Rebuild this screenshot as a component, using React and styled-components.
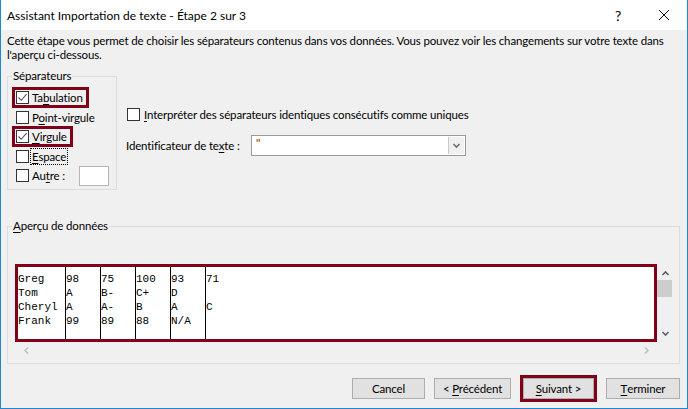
import React from "react";
import styled, { createGlobalStyle } from "styled-components";

const Global = createGlobalStyle`
  html, body { margin: 0; padding: 0; background: #f0f0f0; }
  * { box-sizing: border-box; }
`;

const RED = "#80001a";
const FONT = `Lato, "Noto Sans", "DejaVu Sans", sans-serif`;

const Window = styled.div`
  width: 688px;
  height: 409px;
  display: flex;
  flex-direction: column;
  background: #f0f0f0;
  border: 1px solid #1c87d6;
  border-top: none;
  font-family: ${FONT};
  font-size: 11.5px;
  letter-spacing: -0.15px;
  color: #000;
  overflow: hidden;
`;

const TitleBar = styled.div`
  height: 30px;
  flex: none;
  background: #fff;
  display: flex;
  align-items: center;
  padding-left: 6px;
`;

const Title = styled.div`
  flex: 1;
  font-size: 12px;
  letter-spacing: 0;
`;

const TitleButton = styled.div`
  width: 46px;
  height: 30px;
  display: flex;
  align-items: center;
  justify-content: center;
  font-size: 14px;
`;

const Body = styled.div`
  flex: 1;
  display: flex;
  flex-direction: column;
  padding: 4px 7px 0 6px;
`;

const Intro = styled.p`
  margin: 0;
  line-height: 14px;
`;

const Upper = styled.div`
  display: flex;
  margin-top: 8px;
  align-items: flex-start;
`;

const Group = styled.fieldset`
  margin: 0;
  border: 1px solid #dcdcdc;
  padding: ${(p) => p.$pad};
  width: ${(p) => p.$w};
  height: ${(p) => p.$h};
  min-inline-size: 0;
`;

const Legend = styled.legend`
  padding: 0 1px;
  margin-left: -3px;
  line-height: 12px;
`;

const SepList = styled.div`
  display: flex;
  flex-direction: column;
`;

const SepRow = styled.div`
  height: 19.5px;
  display: flex;
  align-items: center;
`;

const CheckItem = styled.label`
  display: inline-flex;
  align-items: center;
  height: 15px;
  padding: 0 3px 0 1px;
  gap: 3px;
  outline: ${(p) => (p.$hl ? `3px solid ${RED}` : "none")};
`;

const Box = styled.span`
  width: 13px;
  height: 13px;
  flex: none;
  border: 1px solid #333;
  background: #fff;
  display: flex;
  align-items: center;
  justify-content: center;
`;

const Focus = styled.span`
  outline: 1px dotted #000;
  outline-offset: 1px;
`;

const OtherInput = styled.div`
  width: 30px;
  height: 20px;
  margin-left: 11px;
  border: 1px solid #b5b5b5;
  background: #fff;
`;

const Options = styled.div`
  display: flex;
  flex-direction: column;
  padding-left: 10px;
  padding-top: 37px;
`;

const OptionRow = styled.div`
  display: flex;
  align-items: center;
  height: ${(p) => p.$h || "15px"};
  margin-bottom: ${(p) => p.$mb || "0"};
  gap: ${(p) => p.$gap || "0"};
`;

const FieldLabel = styled.span`
  width: 125px;
  margin-left: -1px;
  white-space: nowrap;
`;

const Combo = styled.div`
  width: 215px;
  height: 21px;
  border: 1px solid #9a9a9a;
  background: #fff;
  display: flex;
  align-items: stretch;
`;

const ComboValue = styled.div`
  flex: 1;
  padding-left: 4px;
  color: #b85a10;
  font-weight: bold;
  line-height: 14px;
`;

const ComboBtn = styled.div`
  width: 16px;
  margin: 1px;
  border-left: 1px solid #c8c8c8;
  background: #f0f0f0;
  display: flex;
  align-items: center;
  justify-content: center;
`;

const PreviewArea = styled.div`
  display: flex;
  flex-direction: column;
  padding-top: 30px;
`;

const PreviewRow = styled.div`
  display: flex;
  align-items: stretch;
`;

const ListBox = styled.div`
  width: 642px;
  height: 78px;
  border: 3px solid ${RED};
  background: #fff;
  display: flex;
  font-family: "Liberation Mono", "Courier New", monospace;
  font-size: 11px;
  line-height: 14px;
  letter-spacing: 0;
  color: #000;
`;

const Col = styled.div`
  width: ${(p) => p.$w};
  flex: ${(p) => (p.$grow ? 1 : "none")};
  border-right: ${(p) => (p.$grow ? "none" : "1px solid #000")};
  padding-top: 5px;
  white-space: pre;
`;

const VScroll = styled.div`
  width: 17px;
  display: flex;
  flex-direction: column;
  align-items: center;
  justify-content: space-between;
  padding: 5px 0 4px;
`;

const Thumb = styled.div`
  width: 15px;
  height: 17px;
  background: #cdcdcd;
  margin-top: 2px;
  align-self: flex-start;
`;

const Spacer = styled.div`
  flex: 1;
`;

const HScroll = styled.div`
  width: 642px;
  height: 17px;
  display: flex;
  align-items: center;
  justify-content: space-between;
  padding: 0 6px 0 7px;
`;

const Buttons = styled.div`
  display: flex;
  justify-content: flex-end;
  align-items: center;
  gap: 9px;
  margin-top: 14px;
`;

const Button = styled.div`
  width: ${(p) => p.$w || "74px"};
  height: 21px;
  background: #e1e1e1;
  border: 1px solid #adadad;
  display: flex;
  align-items: center;
  justify-content: center;
  outline: ${(p) => (p.$hl ? `3px solid ${RED}` : "none")};
  margin: ${(p) => (p.$hl ? "0 3px" : "0")};
`;

const U = styled.span`
  text-decoration: underline;
  text-underline-offset: 2px;
`;

const Check = () => (
  <svg width="11" height="11" viewBox="0 0 11 11">
    <path d="M1.5 5.5 L4.2 8.3 L9.6 2.2" fill="none" stroke="#555" strokeWidth="1.1" />
  </svg>
);

const Chevron = ({ dir = "down", color = "#606060", size = 9 }) => {
  const paths = {
    down: "M1.5 3 L4.5 6 L7.5 3",
    up: "M1.5 6 L4.5 3 L7.5 6",
    left: "M6 1.5 L3 4.5 L6 7.5",
    right: "M3 1.5 L6 4.5 L3 7.5",
  };
  return (
    <svg width={size} height={size} viewBox="0 0 9 9">
      <path d={paths[dir]} fill="none" stroke={color} strokeWidth="1.6" />
    </svg>
  );
};

const CloseIcon = () => (
  <svg width="12" height="12" viewBox="0 0 12 12">
    <path d="M1 1 L11 11 M11 1 L1 11" stroke="#111" strokeWidth="1" />
  </svg>
);

const data = [
  ["Greg", "98", "75", "100", "93", "71"],
  ["Tom", "A", "B-", "C+", "D", ""],
  ["Cheryl", "A", "A-", "B", "A", "C"],
  ["Frank", "99", "89", "88", "N/A", ""],
];

export default function App() {
  const cols = data[0].map((_, i) => data.map((r) => r[i]).join("\n"));
  return (
    <>
      <Global />
      <Window>
        <TitleBar>
          <Title>Assistant Importation de texte - Étape 2 sur 3</Title>
          <TitleButton>?</TitleButton>
          <TitleButton>
            <CloseIcon />
          </TitleButton>
        </TitleBar>
        <Body>
          <Intro>
            Cette étape vous permet de choisir les séparateurs contenus dans vos données. Vous pouvez voir les
            changements sur votre texte dans l'aperçu ci-dessous.
          </Intro>
          <Upper>
            <Group $w="110px" $h="120px" $pad="6px 0 0 7px">
              <Legend>Séparateurs</Legend>
              <SepList>
                <SepRow>
                  <CheckItem $hl>
                    <Box><Check /></Box>
                    <span>Ta<U>b</U>ulation</span>
                  </CheckItem>
                </SepRow>
                <SepRow>
                  <CheckItem>
                    <Box />
                    <span>P<U>o</U>int-virgule</span>
                  </CheckItem>
                </SepRow>
                <SepRow>
                  <CheckItem $hl>
                    <Box><Check /></Box>
                    <span><U>V</U>irgule</span>
                  </CheckItem>
                </SepRow>
                <SepRow>
                  <CheckItem>
                    <Box />
                    <Focus><U>E</U>space</Focus>
                  </CheckItem>
                </SepRow>
                <SepRow>
                  <CheckItem>
                    <Box />
                    <span>Au<U>t</U>re :</span>
                  </CheckItem>
                  <OtherInput />
                </SepRow>
              </SepList>
            </Group>
            <Options>
              <OptionRow $mb="13px" $gap="4px">
                <Box />
                <span><U>I</U>nterpréter des séparateurs identiques consécutifs comme uniques</span>
              </OptionRow>
              <OptionRow $h="21px">
                <FieldLabel>Identificateur de te<U>x</U>te :</FieldLabel>
                <Combo>
                  <ComboValue>"</ComboValue>
                  <ComboBtn>
                    <Chevron dir="down" color="#707070" />
                  </ComboBtn>
                </Combo>
              </OptionRow>
            </Options>
          </Upper>
          <PreviewArea>
            <Group $w="673px" $h="144px" $pad="32px 0 0 7px">
              <Legend><U>A</U>perçu de données</Legend>
              <PreviewRow>
                <ListBox>
                  {cols.map((c, i) => (
                    <Col key={i} $w={i === 0 ? "48px" : "35px"} $grow={i === cols.length - 1}>
                      {c}
                    </Col>
                  ))}
                </ListBox>
                <VScroll>
                  <Chevron dir="up" />
                  <Thumb />
                  <Spacer />
                  <Chevron dir="down" />
                </VScroll>
              </PreviewRow>
              <HScroll>
                <Chevron dir="left" color="#c0c0c0" />
                <Chevron dir="right" color="#c0c0c0" />
              </HScroll>
            </Group>
          </PreviewArea>
          <Buttons>
            <Button $w="73px">Cancel</Button>
            <Button $w="77px"><span>&lt; <U>P</U>récédent</span></Button>
            <Button $w="71px" $hl><span><U>S</U>uivant &gt;</span></Button>
            <Button $w="74px"><U>T</U>erminer</Button>
          </Buttons>
        </Body>
      </Window>
    </>
  );
}
